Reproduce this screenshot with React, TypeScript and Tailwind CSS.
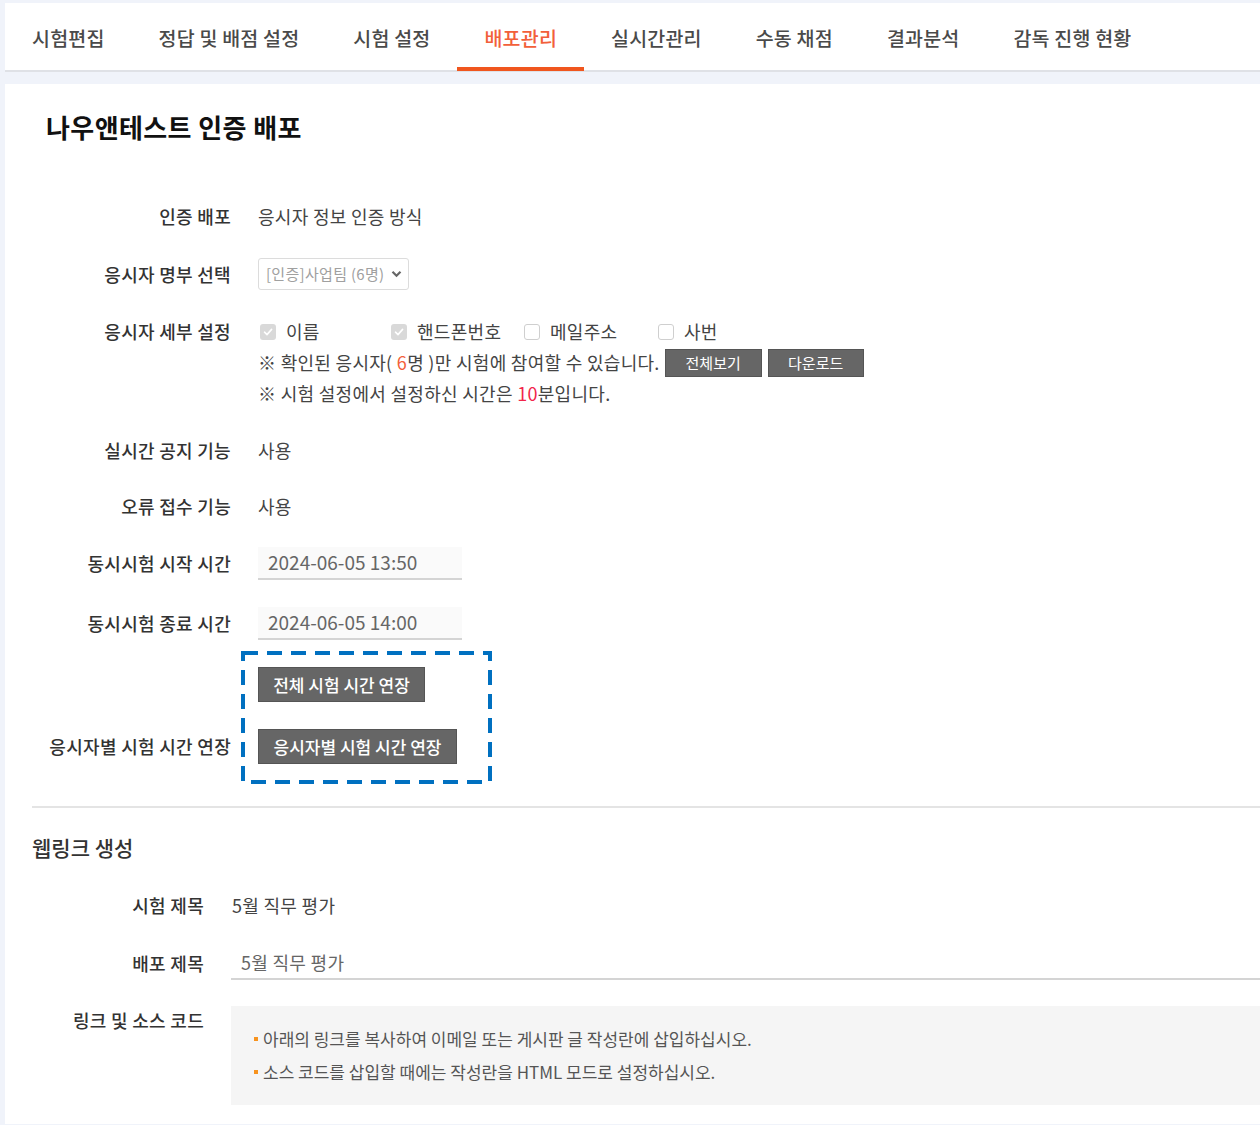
import React from "react";

const FONT = { fontFamily: '"Noto Sans CJK KR", "Noto Sans", sans-serif' };

const tabs = ["시험편집", "정답 및 배점 설정", "시험 설정", "배포관리", "실시간관리", "수동 채점", "결과분석", "감독 진행 현황"];

function Check({ checked }: { checked: boolean }) {
  return checked ? (
    <span className="inline-flex h-[16px] w-[16px] items-center justify-center rounded-[3px] bg-[#d9d9d9]">
      <svg width="12" height="12" viewBox="0 0 12 12">
        <path d="M2.5 6.2 L5 8.6 L9.6 3.4" fill="none" stroke="#ffffff" strokeWidth="1.6" strokeLinecap="round" strokeLinejoin="round" />
      </svg>
    </span>
  ) : (
    <span className="inline-block h-[16px] w-[16px] rounded-[3px] border border-[#cfcfcf] bg-white" />
  );
}

function Label({ children }: { children: React.ReactNode }) {
  return <div className="w-[226px] shrink-0 text-right font-medium text-[#333]">{children}</div>;
}

export default function App() {
  return (
    <div className="min-h-[1125px] w-[1260px] overflow-hidden bg-[#f0f3fa] text-[18px] tracking-[0.3px]" style={FONT}>
      {/* Tabs */}
      <div className="ml-[5px] mt-[3px] flex h-[67px] bg-white shadow-[0_2px_0_#dfe1e6]">
        {tabs.map((t) => {
          const active = t === "배포관리";
          return (
            <div
              key={t}
              className={
                active
                  ? "flex h-[68px] items-center border-b-4 border-[#f0561e] px-[27px] pt-[6px] text-[19.5px] font-medium tracking-[0.2px] text-[#f2603a]"
                  : "flex h-[68px] items-center border-b-4 border-transparent px-[27px] pt-[6px] text-[19.5px] font-medium tracking-[0.2px] text-[#4a4a4a]"
              }
            >
              {t}
            </div>
          );
        })}
      </div>

      {/* Main card */}
      <div className="ml-[5px] mt-[14px] bg-white pb-[19px] pt-[27px]">
        <h1 className="ml-[41px] h-[32px] text-[26px] font-bold leading-[32px] tracking-[0.4px] text-[#111]">나우앤테스트 인증 배포</h1>

        <div className="text-[#444]">
          {/* 인증 배포 */}
          <div className="mt-[57px] flex h-[32px] items-center gap-[27px]">
            <Label>인증 배포</Label>
            <div>응시자 정보 인증 방식</div>
          </div>

          {/* 명부 선택 */}
          <div className="mt-[26px] flex h-[32px] items-center gap-[27px]">
            <Label>응시자 명부 선택</Label>
            <div className="flex h-[32px] w-[151px] items-center justify-between rounded-[3px] border border-[#dcdcdc] bg-white pl-[7px] pr-[6px] text-[15px] tracking-[0.3px] text-[#a0a0a0]">
              <span>[인증]사업팀 (6명)</span>
              <svg width="11" height="8" viewBox="0 0 11 8">
                <path d="M1.5 1.8 L5.5 5.8 L9.5 1.8" fill="none" stroke="#666" strokeWidth="2.2" />
              </svg>
            </div>
          </div>

          {/* 세부 설정 */}
          <div className="mt-[26px] flex gap-[27px] leading-[31px]">
            <Label>응시자 세부 설정</Label>
            <div>
              <div className="flex items-center">
                <div className="flex w-[133px] items-center gap-[10px] pl-[2px]">
                  <Check checked />
                  <span>이름</span>
                </div>
                <div className="flex w-[133px] items-center gap-[10px]">
                  <Check checked />
                  <span>핸드폰번호</span>
                </div>
                <div className="flex w-[134px] items-center gap-[10px]">
                  <Check checked={false} />
                  <span>메일주소</span>
                </div>
                <div className="flex items-center gap-[10px]">
                  <Check checked={false} />
                  <span>사번</span>
                </div>
              </div>
              <div className="flex items-center">
                <span>
                  ※ 확인된 응시자( <span className="text-[#f2603a]">6</span>명 )만 시험에 참여할 수 있습니다.
                </span>
                <button className="ml-[5px] h-[28px] w-[97px] border border-[#555] bg-[#666] text-[15px] leading-[26px] tracking-normal text-white">전체보기</button>
                <button className="ml-[6px] h-[28px] w-[96px] border border-[#555] bg-[#666] text-[15px] leading-[26px] tracking-normal text-white">다운로드</button>
              </div>
              <div>
                ※ 시험 설정에서 설정하신 시간은 <span className="text-[#f2254a]">10</span>분입니다.
              </div>
            </div>
          </div>

          {/* 실시간 공지 */}
          <div className="mt-[25px] flex h-[32px] items-center gap-[27px]">
            <Label>실시간 공지 기능</Label>
            <div>사용</div>
          </div>

          <div className="mt-[24px] flex h-[32px] items-center gap-[27px]">
            <Label>오류 접수 기능</Label>
            <div>사용</div>
          </div>

          <div className="mt-[25px] flex h-[32px] items-center gap-[27px]">
            <Label>동시시험 시작 시간</Label>
            <div className="flex h-[33px] w-[204px] items-center border-b-2 border-[#d4d4d4] bg-[#fafafa] pl-[10px] text-[19px] tracking-normal text-[#666]">2024-06-05 13:50</div>
          </div>

          <div className="mt-[28px] flex h-[32px] items-center gap-[27px]">
            <Label>동시시험 종료 시간</Label>
            <div className="flex h-[33px] w-[204px] items-center border-b-2 border-[#d4d4d4] bg-[#fafafa] pl-[10px] text-[19px] tracking-normal text-[#666]">2024-06-05 14:00</div>
          </div>

          {/* Extension buttons */}
          <div className="mt-[12px] flex">
            <div className="flex w-[226px] shrink-0 flex-col justify-end pb-[20px]">
              <div className="flex h-[35px] items-center justify-end font-medium text-[#333]">응시자별 시험 시간 연장</div>
            </div>
            <div className="relative ml-[10px] flex flex-col items-start gap-[27px] pb-[20px] pl-[17px] pr-[35px] pt-[16px]">
              <svg className="pointer-events-none absolute inset-0 h-full w-full" preserveAspectRatio="none">
                <rect x="2" y="2" width="calc(100% - 4px)" height="calc(100% - 4px)" fill="none" stroke="#0070c0" strokeWidth="4" strokeDasharray="15 9" />
              </svg>
              <button className="h-[35px] w-[167px] border border-[#555] bg-[#666] text-[17px] font-medium tracking-normal text-white">전체 시험 시간 연장</button>
              <button className="h-[35px] w-[199px] border border-[#555] bg-[#666] text-[17px] font-medium tracking-normal text-white">응시자별 시험 시간 연장</button>
            </div>
          </div>

          <div className="ml-[27px] mt-[22px] h-[2px] bg-[#e4e4e4]" />

          {/* Web link section */}
          <h2 className="ml-[27px] mt-[24px] h-[30px] text-[21px] font-medium leading-[30px] tracking-normal text-[#333]">웹링크 생성</h2>

          <div className="mt-[27px] flex h-[32px] items-center gap-[28px]">
            <div className="w-[199px] shrink-0 text-right font-medium text-[#333]">시험 제목</div>
            <div>5월 직무 평가</div>
          </div>

          <div className="mt-[25px] flex items-end gap-[27px]">
            <div className="mb-[1px] flex h-[32px] w-[199px] shrink-0 items-center justify-end font-medium text-[#333]">배포 제목</div>
            <div className="flex h-[34px] flex-1 items-center border-b-2 border-[#d4d4d4] pl-[10px] text-[#666]">5월 직무 평가</div>
          </div>

          <div className="mt-[26px] flex gap-[27px]">
            <div className="flex h-[28px] w-[199px] shrink-0 items-center justify-end font-medium text-[#333]">링크 및 소스 코드</div>
            <div className="h-[99px] flex-1 bg-[#f5f5f5] pl-[23px] pt-[16px] text-[17px] leading-[33px] tracking-normal text-[#555]">
              <div className="flex items-center">
                <span className="mr-[5px] inline-block h-[4px] w-[4px] bg-[#f7931e]" />
                아래의 링크를 복사하여 이메일 또는 게시판 글 작성란에 삽입하십시오.
              </div>
              <div className="flex items-center">
                <span className="mr-[5px] inline-block h-[4px] w-[4px] bg-[#f7931e]" />
                소스 코드를 삽입할 때에는 작성란을 HTML 모드로 설정하십시오.
              </div>
            </div>
          </div>
        </div>
      </div>
    </div>
  );
}
